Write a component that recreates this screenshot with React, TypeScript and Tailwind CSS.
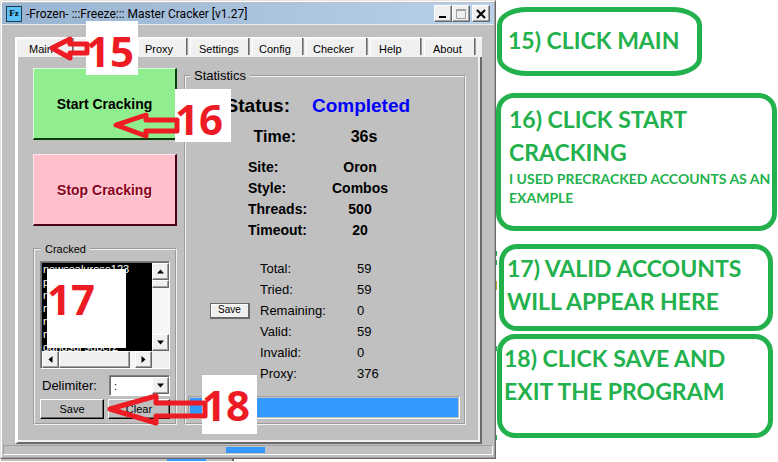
import type { ReactNode } from "react";

const raised =
  "border border-t-white border-l-white border-r-[#696969] border-b-[#696969] bg-[#f0f0f0] shadow-[inset_-1px_-1px_0_#a0a0a0]";
const sunken =
  "border border-t-[#808080] border-l-[#808080] border-r-white border-b-white";
const group =
  "min-w-0 border-2 [border-style:groove] border-[#f0f0f0]";

type Direction = "up" | "down" | "left" | "right";

const triangles: Record<Direction, string> = {
  up: "M0 5.5 L3.5 1.5 L7 5.5Z",
  down: "M0 1.5 L7 1.5 L3.5 5.5Z",
  left: "M5.5 0 L5.5 7 L1.5 3.5Z",
  right: "M1.5 0 L1.5 7 L5.5 3.5Z",
};

function Triangle({ dir }: { dir: Direction }) {
  return (
    <svg width="7" height="7" viewBox="0 0 7 7" aria-hidden="true">
      <path d={triangles[dir]} fill="#000" />
    </svg>
  );
}

function ScrollButton({ dir }: { dir: Direction }) {
  return (
    <button
      type="button"
      aria-label={`Scroll ${dir}`}
      className={`flex h-[17px] w-[17px] shrink-0 items-center justify-center ${raised}`}
    >
      <Triangle dir={dir} />
    </button>
  );
}

function TitleBar() {
  const button = `flex h-[17px] w-[18px] items-center justify-center ${raised}`;
  return (
    <header className="flex h-[22px] items-center border-b border-[#e4ecf5] bg-linear-to-r from-[#99b4d1] to-[#b9d1ea] pr-1 pl-1">
      <span className="flex h-4 w-4 shrink-0 items-center justify-center border border-[#1d3c50] bg-[#5cc1f5] font-['Liberation_Serif',serif] text-[9px] leading-none font-bold">
        Fz
      </span>
      <h1 className="min-w-0 flex-1 truncate pl-1 font-[Roboto,sans-serif] text-[12px] leading-5">
        -Frozen- :::Freeze::: Master Cracker [v1.27]
      </h1>
      <button type="button" aria-label="Minimize" className={button}>
        <svg width="10" height="10" viewBox="0 0 10 10">
          <path d="M1 7h7v2h-7z" />
        </svg>
      </button>
      <button type="button" aria-label="Maximize" className={button}>
        <svg width="10" height="10" viewBox="0 0 10 10" fill="none" stroke="#a0a0a0">
          <path d="M.5 .5h9v9h-9zM.5 1.5h9" />
        </svg>
      </button>
      <button type="button" aria-label="Close" className={`ml-0.5 ${button}`}>
        <svg width="10" height="10" viewBox="0 0 10 10" stroke="#000" strokeWidth="2">
          <path d="M1 1l8 8M9 1l-8 8" />
        </svg>
      </button>
    </header>
  );
}

function Tabs() {
  const tab =
    "h-[17px] border-t border-l border-t-white border-l-white pt-0.5 text-left shadow-[1px_0_0_#696969,2px_0_0_#a0a0a0] text-[11px] leading-4";
  return (
    <nav
      role="tablist"
      className="flex h-5 items-end gap-1 border-t border-l border-white bg-[#f0f0f0] pb-0.5"
    >
      <button type="button" role="tab" aria-selected="true" className={`w-[56px] pl-3 ${tab}`}>
        Main
      </button>
      <button type="button" role="tab" aria-label="Accounts" className={`w-[58px] ${tab}`} />
      <button type="button" role="tab" className={`w-[48px] pl-[6px] ${tab}`}>
        Proxy
      </button>
      <button type="button" role="tab" className={`w-[58px] pl-2 ${tab}`}>
        Settings
      </button>
      <button type="button" role="tab" className={`w-[50px] pl-[6px] ${tab}`}>
        Config
      </button>
      <button type="button" role="tab" className={`w-[60px] pl-[6px] ${tab}`}>
        Checker
      </button>
      <button type="button" role="tab" className={`w-[50px] pl-2 ${tab}`}>
        Help
      </button>
      <button type="button" role="tab" className={`w-[50px] pl-2 ${tab}`}>
        About
      </button>
    </nav>
  );
}

function CrackedList() {
  return (
    <div className={`flex flex-col bg-[#f0f0f0] shadow-[inset_1px_1px_0_#696969] ${sunken} pt-px pl-px`}>
      <div className="flex h-[88px]">
        <textarea
          readOnly
          wrap="off"
          aria-label="Cracked accounts"
          className="min-w-0 flex-1 resize-none overflow-hidden bg-black px-px text-[11px] leading-[13px] text-white outline-none"
          defaultValue={
            "newsealurose123\npasswordsteam\nn\nn\nnewaccount200\nn\ngangsui super2"
          }
        />
        <div className="flex w-[17px] flex-col bg-[#f6f6f6]">
          <ScrollButton dir="up" />
          <div className={`h-2 ${raised}`} />
          <div className="flex-1" />
          <ScrollButton dir="down" />
        </div>
      </div>
      <div className="flex h-[17px] bg-[#f6f6f6]">
        <ScrollButton dir="left" />
        <div className={`w-[71px] ${raised}`} />
        <div className="flex-1" />
        <ScrollButton dir="right" />
        <div className="w-[17px] bg-[#f0f0f0]" />
      </div>
    </div>
  );
}

function Cracked() {
  const button =
    "h-5 border border-t-white border-l-white border-r-black border-b-black bg-[#c0c0c0] text-[11px] leading-4 shadow-[inset_-1px_-1px_0_#696969]";
  return (
    <fieldset className={`mt-[15px] px-[5px] pb-1 ${group}`}>
      <legend className="ml-px px-1 text-[11px] leading-4">Cracked</legend>
      <div className="pt-1">
        <CrackedList />
      </div>
      <div className="mt-1.5 flex items-center justify-between pl-0.5">
        <label htmlFor="delimiter" className="text-[13px] leading-5">
          Delimiter:
        </label>
        <div className={`relative h-[21px] w-[61px] bg-white shadow-[inset_1px_1px_0_#696969] ${sunken}`}>
          <select
            id="delimiter"
            className="block h-full w-full appearance-none bg-transparent pl-1 text-[11px] leading-4 outline-none"
          >
            <option>:</option>
          </select>
          <span
            className={`pointer-events-none absolute top-px right-0 flex h-[17px] w-[17px] items-center justify-center ${raised}`}
          >
            <Triangle dir="down" />
          </span>
        </div>
      </div>
      <div className="mt-[3px] flex justify-between">
        <button type="button" className={`w-16 ${button}`}>
          Save
        </button>
        <button type="button" className={`w-[62px] ${button}`}>
          Clear
        </button>
      </div>
    </fieldset>
  );
}

const settings = [
  ["Site:", "Oron"],
  ["Style:", "Combos"],
  ["Threads:", "500"],
  ["Timeout:", "20"],
];

const counters = [
  ["Total:", "59"],
  ["Tried:", "59"],
  ["Remaining:", "0"],
  ["Valid:", "59"],
  ["Invalid:", "0"],
  ["Proxy:", "376"],
];

function Statistics() {
  return (
    <fieldset className={`min-w-0 flex-1 pr-1 pb-1 pl-0.5 ${group}`}>
      <legend className="ml-0.5 px-1 text-[13px] leading-4">Statistics</legend>
      <dl className="mt-[7px] grid grid-cols-[102px_142px] text-[19px] leading-[30px] font-bold">
        <dt className="text-right">Status:</dt>
        <dd className="text-center text-[#0000ff]">Completed</dd>
      </dl>
      <dl className="grid grid-cols-[108px_136px] text-base leading-8 font-bold">
        <dt className="text-right">Time:</dt>
        <dd className="text-center">36s</dd>
      </dl>
      <dl className="mt-1 pl-[60px] text-sm font-bold">
        {settings.map(([name, value]) => (
          <div key={name} className="grid grid-cols-[60px_104px] leading-[21px]">
            <dt>{name}</dt>
            <dd className="text-center">{value}</dd>
          </div>
        ))}
      </dl>
      <dl className="mt-[17px] pl-[22px] text-[13px]">
        {counters.map(([name, value]) => (
          <div key={name} className="grid grid-cols-[50px_97px_1fr] items-center leading-[21px]">
            <dt className="col-start-2">{name}</dt>
            <dd>{value}</dd>
            {name === "Remaining:" && (
              <dd className="col-start-1 row-start-1 flex">
                <button
                  type="button"
                  className="h-4 w-10 border border-t-[#696969] border-r-2 border-b-2 border-l-[#696969] border-r-[#696969] border-b-[#696969] bg-[#f0f0f0] text-[10px] leading-3 shadow-[inset_1px_1px_0_#fff]"
                >
                  Save
                </button>
              </dd>
            )}
          </div>
        ))}
      </dl>
      <div
        role="progressbar"
        aria-label="Cracking progress"
        aria-valuenow={100}
        className="mt-3 h-[23px] border border-t-[#a0a0a0] border-r-white border-b-white border-l-[#a0a0a0] p-px"
      >
        <div className="h-full bg-[#3399ff]" />
      </div>
    </fieldset>
  );
}

type CalloutProps = {
  place: string;
  label: string;
};

/* White numbered tag that sits over the window. */
function Callout({ place, label }: CalloutProps) {
  return (
    <div
      className={`absolute bg-white font-['Open_Sans','Noto_Sans',sans-serif] text-[42px] font-bold text-[#ed1c24] ${place}`}
    >
      {label}
    </div>
  );
}

function Arrow({ place, width, height, d }: { place: string; width: number; height: number; d: string }) {
  return (
    <svg
      className={`absolute ${place}`}
      width={width}
      height={height}
      fill="none"
      stroke="#ed1c24"
      strokeWidth="5"
      strokeLinejoin="round"
      aria-hidden="true"
    >
      <path d={d} />
    </svg>
  );
}

function CrackerWindow() {
  return (
    <section className="relative border border-t-[#e3e3e3] border-r-[#696969] border-b-[#696969] border-l-[#e3e3e3]">
      <div className="border border-t-white border-r-[#a0a0a0] border-b-[#a0a0a0] border-l-white bg-[#c0c0c0] pt-px">
        <TitleBar />
        <div className="pt-3 pr-3 pl-[13px]">
          <Tabs />
          <main className="flex gap-[7px] border-r-2 border-b-2 border-l-3 border-r-[#696969] border-b-[#696969] border-l-white pt-[11px] pr-3.5 pb-[17px] pl-[15px] shadow-[inset_-2px_-2px_0_#f0f0f0]">
            <div className="flex w-36 shrink-0 flex-col">
              <button
                type="button"
                className="h-[72px] border border-t-[#d5ffd5] border-r-2 border-b-2 border-l-[#d5ffd5] border-r-[#0b3d0b] border-b-[#0b3d0b] bg-[#90ee90] text-sm font-bold"
              >
                Start Cracking
              </button>
              <button
                type="button"
                className="mt-3.5 h-[72px] border border-t-[#ffe8ec] border-r-2 border-b-2 border-l-[#ffe8ec] border-r-[#4a0016] border-b-[#4a0016] bg-[#ffc0cb] text-sm font-bold text-[#8b0020] [text-shadow:1px_1px_0_#ffe4e8]"
              >
                Stop Cracking
              </button>
              <Cracked />
            </div>
            <Statistics />
          </main>
        </div>
        <div className="mt-px mr-px mb-0.5 ml-px border border-t-[#a0a0a0] border-r-white border-b-white border-l-[#a0a0a0] py-px pl-[222px]">
          <div className="h-1.5 w-[39px] bg-[#3399ff]" />
        </div>
      </div>
      <Callout place="top-5 left-[85px] h-[54px] w-[52px] leading-[60px]" label="15" />
      <Arrow place="top-[34px] left-[47px]" width={42} height={27} d="M4 13 L22 4 V9 H39 V18 H22 V23Z" />
      <Callout place="top-[88px] left-[174px] h-[53px] w-14 leading-[60px]" label="16" />
      <Arrow place="top-[110px] left-[110px]" width={70} height={30} d="M5 14 L35 4 V9 H66 V20 H35 V25Z" />
      <Callout place="top-[268px] left-[46px] h-[79px] w-[79px] leading-[60px]" label="17" />
      <Callout place="top-[374px] left-[201px] h-[59px] w-[55px] leading-[60px]" label="18" />
      <Arrow place="top-[390px] left-[103px]" width={104} height={38} d="M6 18 L52 5 V12 H101 V25 H52 V32Z" />
    </section>
  );
}

function Note({ shape, children }: { shape: string; children: ReactNode }) {
  return <li className={`border-5 border-[#22b14c] ${shape}`}>{children}</li>;
}

export default function App() {
  return (
    <div className="grid grid-cols-[minmax(0,1fr)_282px] items-start bg-white font-['Liberation_Sans',Arial,sans-serif] text-black">
      <div>
        <CrackerWindow />
        <div className="ml-[1px] flex h-[2px] bg-[#c0c0c0]">
          <div className="ml-[166px] h-full w-[39px] bg-[#3399ff]" />
          <div className="ml-[26px] h-full flex-1 border-l-2 border-[#696969] bg-white" />
        </div>
      </div>
      <div className="relative">
        <svg className="absolute top-0 left-0" width="2" height="450" aria-hidden="true">
          <path d="M0 251h1v5h-1zM0 260h1v5h-1zM0 346h1v5h-1zM0 435h1v5h-1z" fill="#22b14c" />
          <path d="M0 281h1v9h-1z" fill="#b9ae3c" />
        </svg>
        <ol className="flex flex-col pt-[7px] font-[Lato,Carlito,sans-serif] text-[23px] leading-[33px] font-bold text-[#22b14c]">
          <Note shape="ml-px w-[205px] rounded-[30px/18px] pt-3 pb-3.5 pl-1.5">15) CLICK MAIN</Note>
          <Note shape="mt-[17px] mr-px rounded-[18px] pt-[5px] pb-[19px] pl-2">
            <p className="pr-10">16) CLICK START CRACKING</p>
            <p className="text-[14px] leading-[19px]">I USED PRECRACKED ACCOUNTS AS AN EXAMPLE</p>
          </Note>
          <Note shape="mt-[13px] mr-[5px] ml-[3px] rounded-[18px] pt-[3px] pb-2 pl-[3px]">
            17) VALID ACCOUNTS WILL APPEAR HERE
          </Note>
          <Note shape="mt-[3px] mr-[5px] ml-px rounded-[18px] pt-[3px] pb-[25px] pl-0.5">
            18) CLICK SAVE AND EXIT THE PROGRAM
          </Note>
        </ol>
      </div>
    </div>
  );
}
